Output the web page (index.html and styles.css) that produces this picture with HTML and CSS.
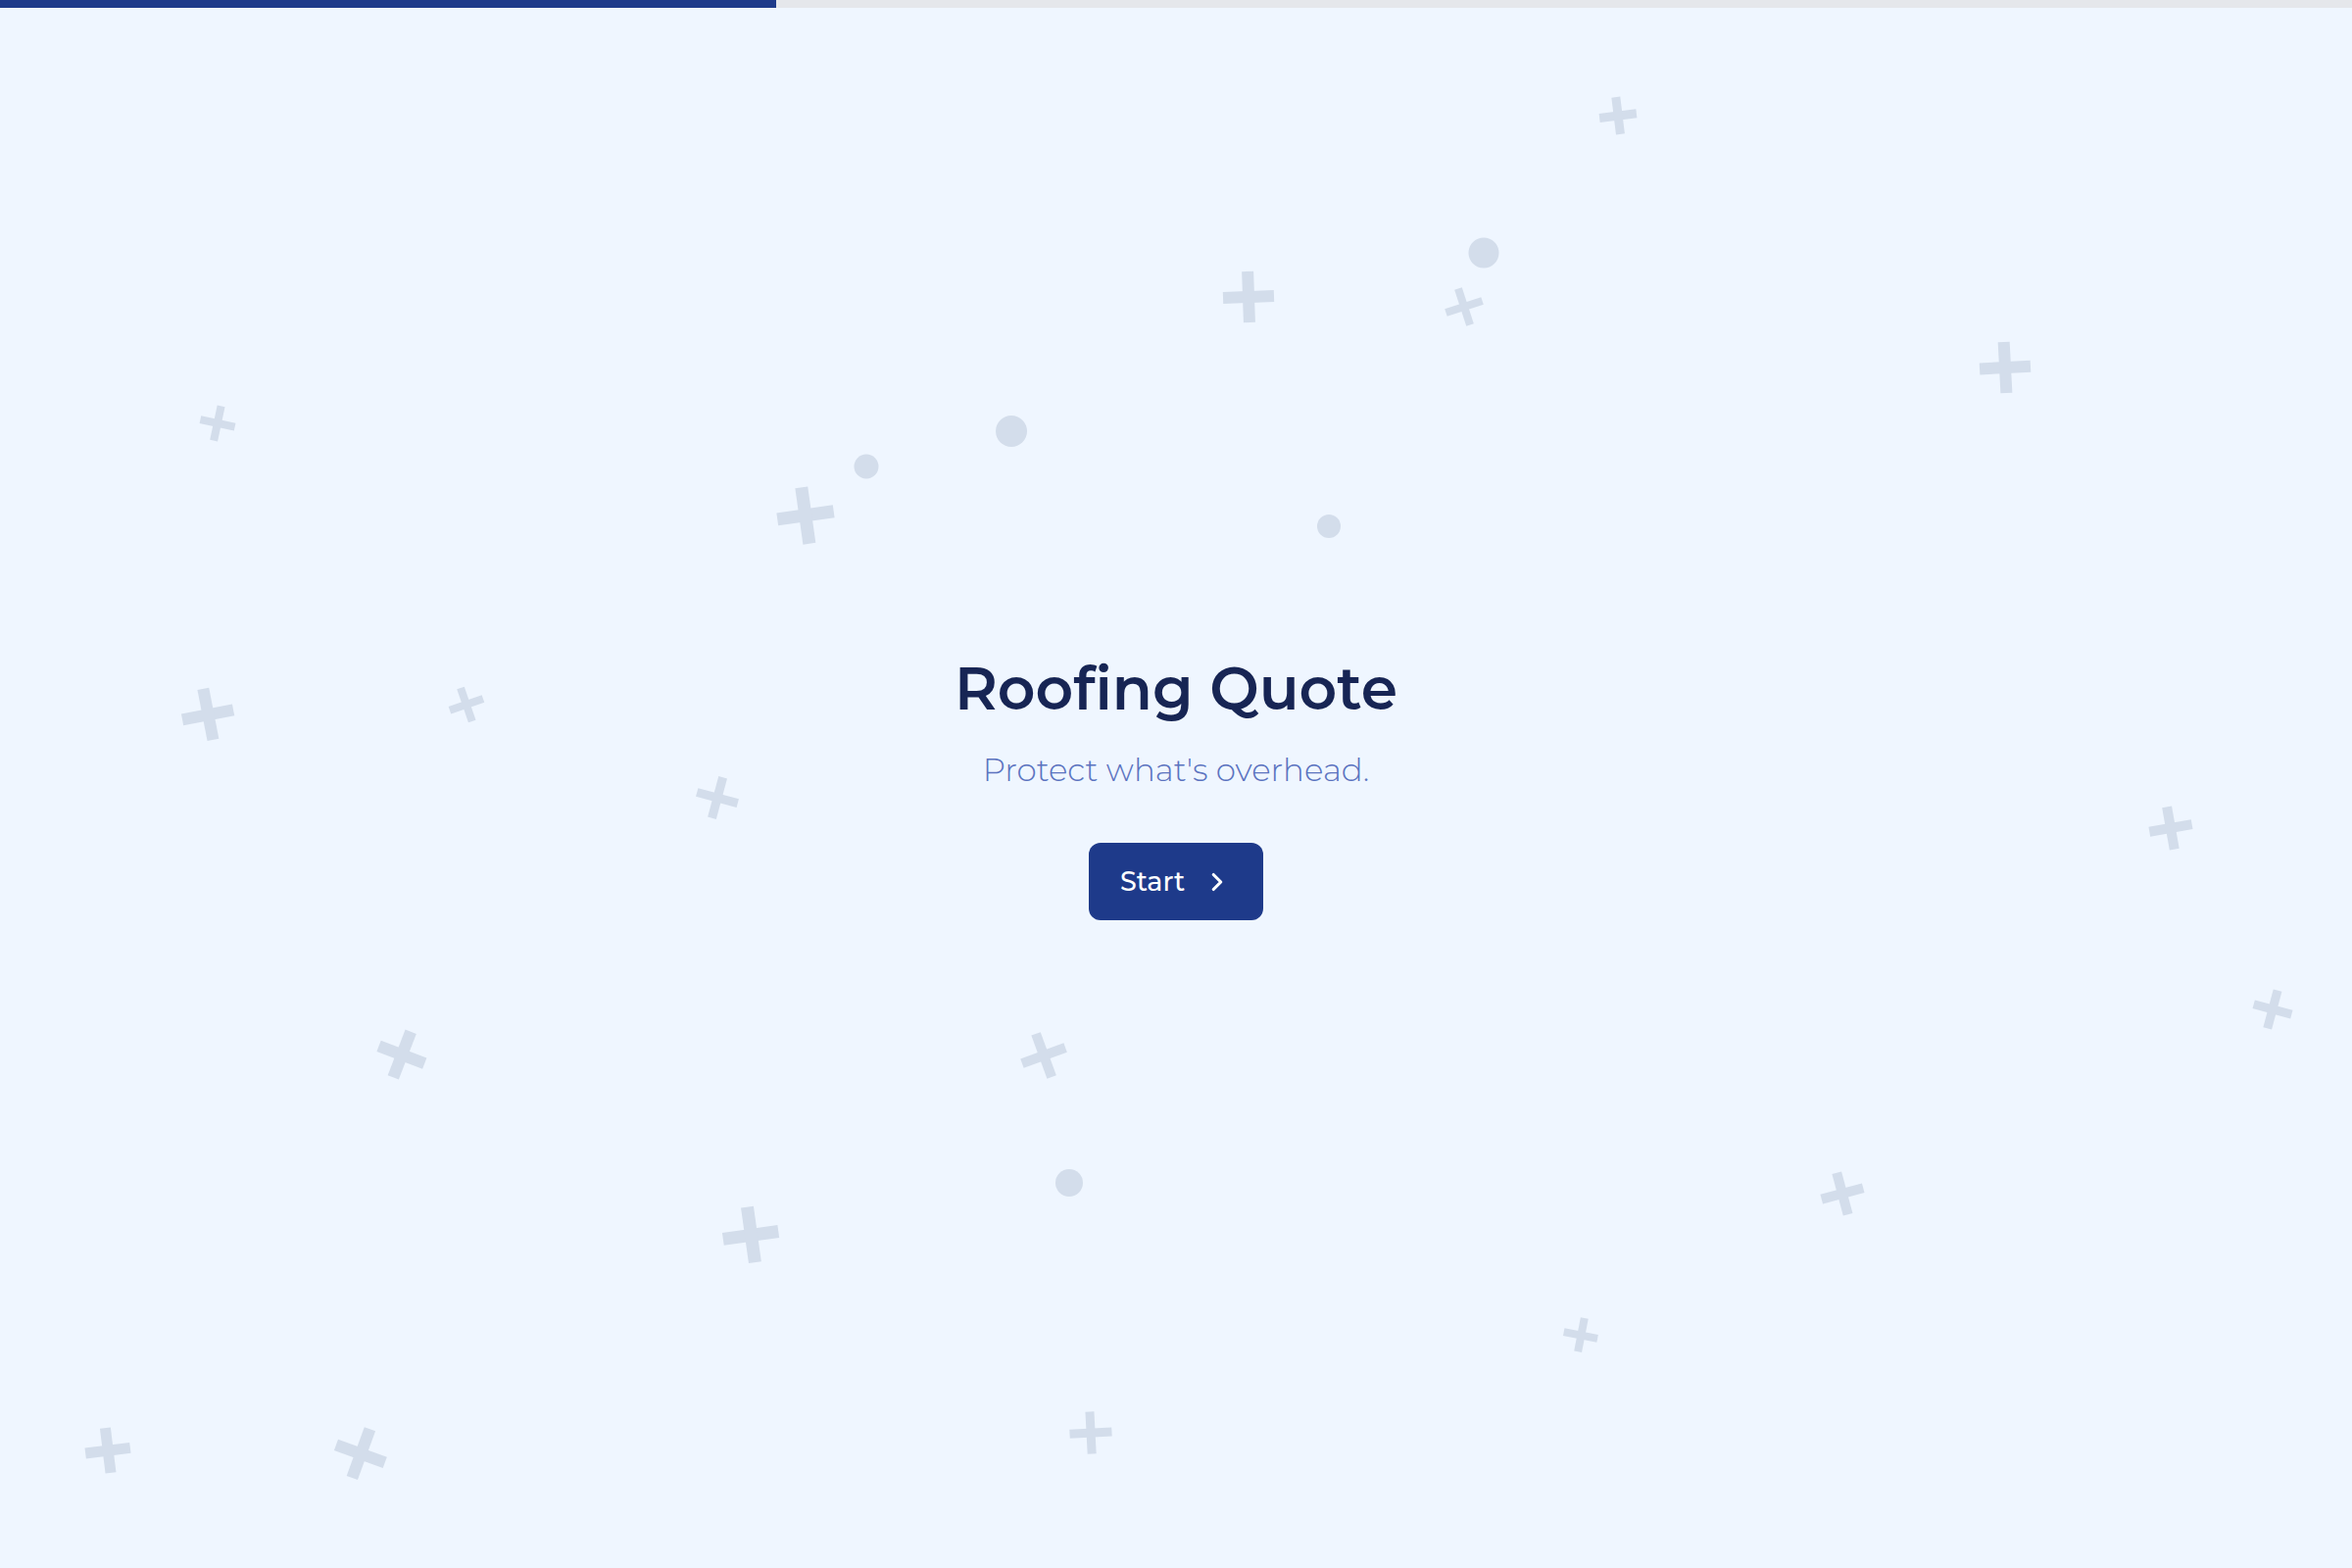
FILE: index.html
```html
<!DOCTYPE html>
<html lang="en">

<head>
    <meta charset="UTF-8">
    <meta name="viewport" content="width=device-width, initial-scale=1.0">
    <title>Roofing Quote</title>
    <link rel="stylesheet" href="styles.css">
</head>

<body>
    <div class="progress">
        <div class="progress-fill" style="width: 33%"></div>
    </div>

    <!-- scattered background marks: x, y, size, rotation -->
    <div class="backdrop" aria-hidden="true">
        <span class="plus" style="--x:1651px; --y:118px; --s:38px; --r:-7deg"></span>
        <span class="plus" style="--x:1274px; --y:303px; --s:52px; --r:-2deg"></span>
        <span class="plus" style="--x:1494px; --y:313px; --s:39px; --r:-18deg"></span>
        <span class="plus" style="--x:2046px; --y:375px; --s:52px; --r:-3deg"></span>
        <span class="plus" style="--x:222px; --y:432px; --s:36px; --r:12deg"></span>
        <span class="plus" style="--x:822px; --y:526px; --s:58px; --r:-8deg"></span>
        <span class="plus" style="--x:212px; --y:729px; --s:53px; --r:-11deg"></span>
        <span class="plus" style="--x:476px; --y:719px; --s:36px; --r:-19deg"></span>
        <span class="plus" style="--x:732px; --y:814px; --s:43px; --r:15deg"></span>
        <span class="plus" style="--x:2215px; --y:845px; --s:44px; --r:-10deg"></span>
        <span class="plus" style="--x:2319px; --y:1030px; --s:40px; --r:15deg"></span>
        <span class="plus" style="--x:410px; --y:1076px; --s:50px; --r:21deg"></span>
        <span class="plus" style="--x:1065px; --y:1077px; --s:47px; --r:-20deg"></span>
        <span class="plus" style="--x:1880px; --y:1218px; --s:44px; --r:-15deg"></span>
        <span class="plus" style="--x:766px; --y:1260px; --s:57px; --r:-8deg"></span>
        <span class="plus" style="--x:1613px; --y:1362px; --s:35px; --r:11deg"></span>
        <span class="plus" style="--x:110px; --y:1480px; --s:46px; --r:-7deg"></span>
        <span class="plus" style="--x:368px; --y:1483px; --s:53px; --r:20deg"></span>
        <span class="plus" style="--x:1113px; --y:1462px; --s:43px; --r:-3deg"></span>

        <span class="dot" style="--x:1514px; --y:258px; --s:31px"></span>
        <span class="dot" style="--x:884px; --y:476px; --s:25px"></span>
        <span class="dot" style="--x:1032px; --y:440px; --s:32px"></span>
        <span class="dot" style="--x:1356px; --y:537px; --s:24px"></span>
        <span class="dot" style="--x:1091px; --y:1207px; --s:28px"></span>
    </div>

    <main class="hero">
        <h1>Roofing Quote</h1>
        <p class="tagline">Protect what's overhead.</p>
        <button type="button" class="start-btn">
            Start
            <svg viewBox="0 0 24 24" fill="none" stroke="currentColor" stroke-width="2.5" stroke-linecap="round" stroke-linejoin="round">
                <path d="m9 18 6-6-6-6" />
            </svg>
        </button>
    </main>
</body>

</html>
```

FILE: styles.css
```css
body {
    font-family: Montserrat, Inter, "Open Sans", sans-serif;
    margin: 0;
    padding: 0;
    background-color: #eff6ff;
    color: #172554;
    min-height: 100vh;
    overflow: hidden;
    position: relative;
}

.progress {
    position: absolute;
    top: 0;
    left: 0;
    right: 0;
    height: 8px;
    background: #e5e7eb;
    z-index: 2;
}

.progress-fill {
    height: 100%;
    background: #1e3a8a;
}

.backdrop {
    position: absolute;
    inset: 0;
    pointer-events: none;
}

.plus,
.dot {
    position: absolute;
    left: var(--x);
    top: var(--y);
    width: var(--s);
    height: var(--s);
    transform: translate(-50%, -50%) rotate(var(--r, 0deg));
}

.plus::before,
.plus::after {
    content: "";
    position: absolute;
    background: #d3ddeb;
}

.plus::before {
    left: 0;
    right: 0;
    top: 50%;
    height: calc(var(--s) * 0.23);
    transform: translateY(-50%);
}

.plus::after {
    top: 0;
    bottom: 0;
    left: 50%;
    width: calc(var(--s) * 0.23);
    transform: translateX(-50%);
}

.dot {
    border-radius: 50%;
    background: #d3ddeb;
}

.hero {
    position: relative;
    z-index: 1;
    box-sizing: border-box;
    min-height: 100vh;
    padding-top: 6px;
    display: flex;
    flex-direction: column;
    align-items: center;
    justify-content: center;
    text-align: center;
}

h1 {
    font-size: 60px;
    font-weight: 600;
    margin: 0 0 26px;
    line-height: 1.2;
    color: #172554;
}

.tagline {
    font-size: 32.5px;
    font-weight: 300;
    margin: 0 0 53px;
    line-height: 1.3;
    color: #5b73bf;
}

.start-btn {
    display: inline-flex;
    align-items: center;
    gap: 18px;
    height: 79px;
    padding: 0 32px;
    border: none;
    border-radius: 12px;
    background-color: #1e3a8a;
    color: #fff;
    font-family: inherit;
    font-size: 27px;
    font-weight: 500;
    cursor: pointer;
}

.start-btn svg {
    width: 30px;
    height: 30px;
}
```
